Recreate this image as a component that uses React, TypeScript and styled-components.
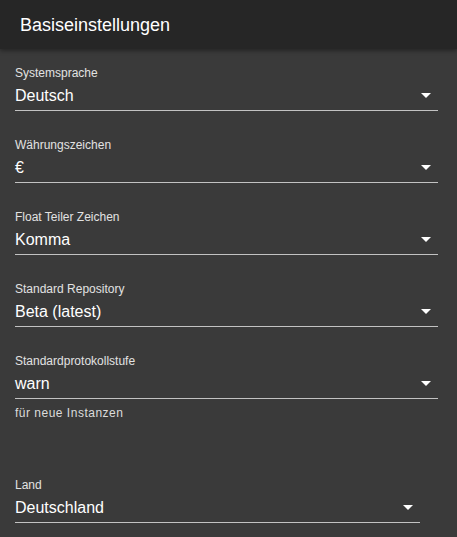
import React from "react";
import styled, { createGlobalStyle } from "styled-components";

const GlobalStyle = createGlobalStyle`
  html, body {
    margin: 0;
    padding: 0;
    background-color: #3a3a3a;
    font-family: "Liberation Sans", Arial, sans-serif;
  }
`;

const Panel = styled.div`
  width: 457px;
  min-height: 537px;
  background-color: #3a3a3a;
  color: #fff;
  overflow: hidden;
`;

const Header = styled.div`
  height: 48px;
  padding-top: 1px;
  padding-left: 20px;
  background-color: #262626;
  box-shadow: 0 2px 4px rgba(0, 0, 0, 0.35);
  font-size: 18px;
  line-height: 48px;
  color: #fff;
`;

const Content = styled.div`
  display: flex;
  flex-direction: column;
  padding: 18px 19px 0 15px;
`;

const Field = styled.div<{ $width?: number; $gapBefore?: number }>`
  display: flex;
  flex-direction: column;
  width: ${(p) => (p.$width ? `${p.$width}px` : "100%")};
  margin-top: ${(p) => p.$gapBefore ?? 0}px;
`;

const Label = styled.label`
  font-size: 12px;
  line-height: 12px;
  color: #e2e2e2;
  margin-bottom: 1px;
`;

const SelectRow = styled.div`
  display: flex;
  align-items: center;
  justify-content: space-between;
  padding: 6px 0 5px;
  border-bottom: 1px solid #c2c2c2;
  cursor: pointer;
`;

const Value = styled.span`
  font-size: 16px;
  line-height: 19px;
  color: #fff;
`;

const Arrow = styled.svg`
  width: 24px;
  height: 24px;
  margin: -3px 0 -2px;
  fill: #fff;
  flex-shrink: 0;
`;

const Helper = styled.div`
  margin-top: 4px;
  font-size: 12px;
  line-height: 20px;
  letter-spacing: 0.5px;
  color: #dcdcdc;
`;

type SelectFieldProps = {
  label: string;
  value: string;
  helper?: string;
  width?: number;
  gapBefore?: number;
};

const SelectField: React.FC<SelectFieldProps> = ({
  label,
  value,
  helper,
  width,
  gapBefore,
}) => (
  <Field $width={width} $gapBefore={gapBefore}>
    <Label>{label}</Label>
    <SelectRow>
      <Value>{value}</Value>
      <Arrow viewBox="0 0 24 24">
        <path d="M7 10l5 5 5-5z" />
      </Arrow>
    </SelectRow>
    {helper && <Helper>{helper}</Helper>}
  </Field>
);

export default function App() {
  return (
    <>
      <GlobalStyle />
      <Panel>
        <Header>Basiseinstellungen</Header>
        <Content>
          <SelectField label="Systemsprache" value="Deutsch" />
          <SelectField label="Währungszeichen" value="€" gapBefore={28} />
          <SelectField label="Float Teiler Zeichen" value="Komma" gapBefore={28} />
          <SelectField label="Standard Repository" value="Beta (latest)" gapBefore={28} />
          <SelectField
            label="Standardprotokollstufe"
            value="warn"
            helper="für neue Instanzen"
            gapBefore={28}
          />
          <SelectField label="Land" value="Deutschland" width={405} gapBefore={56} />
        </Content>
      </Panel>
    </>
  );
}
